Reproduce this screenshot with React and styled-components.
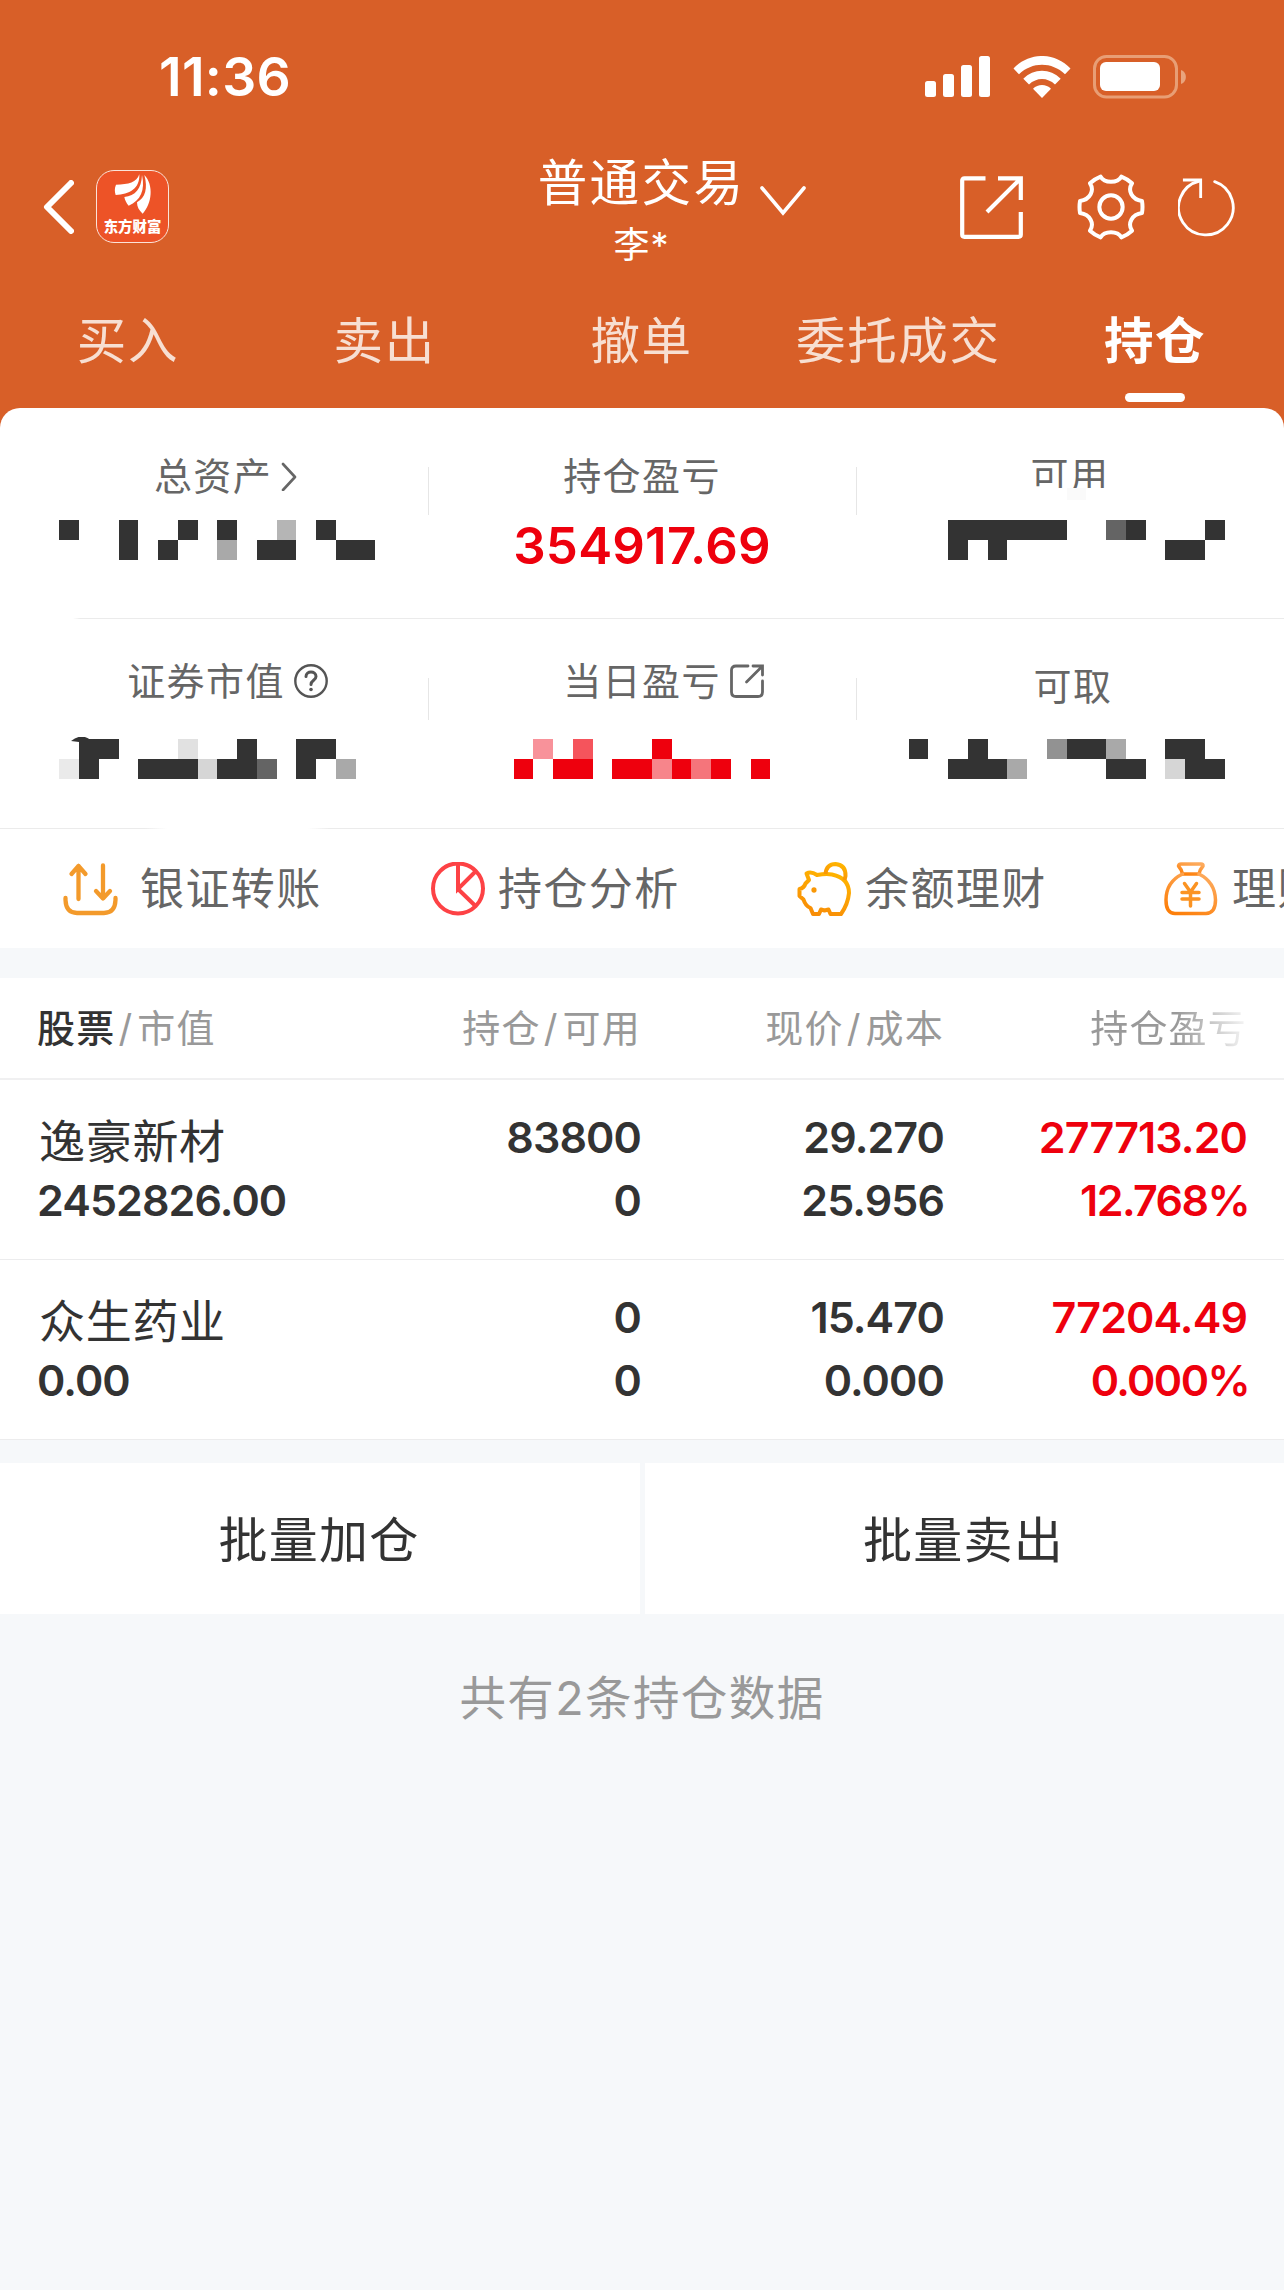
import React from 'react';
import styled, { createGlobalStyle } from 'styled-components';

const GlobalStyle = createGlobalStyle`
  * {
    box-sizing: border-box;
  }
  body {
    margin: 0;
    background: #f6f8fa;
    font-family: Inter, "Noto Sans CJK SC", sans-serif;
    overflow-x: hidden;
  }
`;

const Page = styled.div`
  width: 1284px;
  height: 2290px;
  overflow: hidden;
  background: #f6f8fa;
`;

const Top = styled.header`
  height: 428px;
  background: #d85f28;
  color: #fff;
`;

const StatusBar = styled.div`
  height: 154px;
  padding: 0 96px 0 159px;
  display: flex;
  justify-content: space-between;
  align-items: center;
`;

const Clock = styled.div`
  font-size: 53.5px;
  font-weight: 600;
  line-height: 60px;
  letter-spacing: 0.3px;
`;

const StatusIcons = styled.div`
  display: flex;
  align-items: center;
  height: 44px;
`;

const NavBar = styled.div`
  height: 126px;
  display: grid;
  grid-template-columns: 428px 428px 428px;
`;

const NavLeft = styled.div`
  display: flex;
  align-items: center;
  gap: 22px;
  padding: 0 0 21px 43px;
  height: 126px;
`;

const Logo = styled.div`
  width: 73px;
  height: 73px;
  border: 1.5px solid #fbe3d9;
  border-radius: 18px;
  background: #ed5327;
  display: flex;
  flex-direction: column;
  align-items: center;
`;

const LogoMark = styled.svg`
  margin-top: 2px;
`;

const LogoText = styled.div`
  margin-top: -4px;
  font-family: "Noto Sans CJK SC", sans-serif;
  font-size: 14.4px;
  font-weight: 900;
  line-height: 18px;
  white-space: nowrap;
`;

const NavTitle = styled.div`
  display: flex;
  justify-content: center;
  gap: 15px;
  padding-left: 60px;
`;

const TitleText = styled.div`
  display: flex;
  flex-direction: column;
  align-items: center;
  padding-top: 1px;
  font-size: 49.5px;
  line-height: 56px;
  letter-spacing: 2.4px;
  white-space: nowrap;
`;

const Account = styled.span`
  font-size: 36px;
  line-height: 44px;
  margin-top: 12px;
  letter-spacing: 1px;
`;

const TitleArrow = styled.svg`
  margin-top: 31px;
`;

const NavRight = styled.div`
  display: flex;
  align-items: center;
  height: 126px;
  padding: 0 0 20px 104px;
`;

const Tabs = styled.nav`
  display: grid;
  grid-template-columns: repeat(5, 1fr);
  height: 148px;
`;

const Tab = styled.div`
  display: flex;
  flex-direction: column;
  align-items: center;
  padding: 31px 1px 0 0;
  font-size: 49.5px;
  line-height: 60px;
  letter-spacing: 1.6px;
  font-weight: ${({ $active }) => ($active ? 700 : 400)};
  color: ${({ $active }) => ($active ? '#fff' : '#f7dfd2')};

  &::after {
    content: "";
    width: 60px;
    height: 9px;
    margin-top: 22px;
    border-radius: 4.5px;
    background: ${({ $active }) => ($active ? '#fff' : 'transparent')};
  }
`;

const Summary = styled.section`
  margin-top: -20px;
  height: 421px;
  background: #fff;
  border-radius: 20px 20px 0 0;
`;

const SummaryRow = styled.div`
  display: grid;
  grid-template-columns: repeat(3, 1fr);
  height: ${({ $height }) => $height}px;
`;

const SummaryCell = styled.div`
  position: relative;
  height: 100%;
  padding-top: ${({ $top }) => $top}px;

  &:not(:last-child)::after {
    content: "";
    position: absolute;
    right: -1px;
    top: 59px;
    width: 1px;
    height: ${({ $rule }) => $rule}px;
    background: #e6e6e6;
  }
`;

const Label = styled.div`
  display: flex;
  align-items: center;
  justify-content: center;
  height: 44px;
  padding-left: ${({ $shift }) => $shift || 0}px;
  gap: 9px;
  font-size: 38px;
  line-height: 44px;
  letter-spacing: 1.4px;
  color: #666;
`;

const Amount = styled.div`
  margin-top: 18px;
  text-align: center;
  font-size: 51px;
  font-weight: 600;
  line-height: 60px;
  letter-spacing: 0.2px;
  color: #ee000d;
`;

const Mosaic = styled.div`
  position: relative;
  display: grid;
  grid-template-columns: repeat(${({ $cols }) => $cols}, 19.75px);
  grid-auto-rows: 20px;
  margin-top: ${({ $gap }) => $gap}px;
  margin-left: ${({ $left }) => $left}px;
`;

const Pixel = styled.span`
  background: ${({ $color }) => $color};
`;

const Smudge = styled.svg`
  position: absolute;
  left: 12px;
  top: -2px;
`;

// erased strip that overlaps the lower edge of the label
const Residue = styled.span`
  position: absolute;
  left: 170px;
  top: 80px;
  width: 90px;
  height: 12px;
  background: linear-gradient(90deg, #fff 41px, #fafafa 41px, #fafafa 60px, #fff 60px);
`;

const Rule = styled.div`
  height: 1px;
  background: ${({ $fade }) => $fade};
`;

const Shortcuts = styled.section`
  display: flex;
  height: 119px;
  padding-left: 63px;
  background: #fff;
  overflow: hidden;
`;

const Shortcut = styled.div`
  display: flex;
  align-items: center;
  flex: 0 0 367px;
  gap: ${({ $gap }) => $gap}px;
  font-size: 44px;
  line-height: 60px;
  letter-spacing: 1.4px;
  color: #666;
  white-space: nowrap;

  svg {
    flex: none;
  }
`;

const Holdings = styled.section`
  margin-top: 30px;
  background: #fff;
`;

const columns = '341px 263px 303px 303px';

const HeadRow = styled.div`
  display: grid;
  grid-template-columns: ${columns};
  height: 102px;
  padding: 27px 0 0 37px;
  border-bottom: 2px solid #f0f0f1;
  font-size: 38px;
  line-height: 46px;
  letter-spacing: 1.2px;
  color: #999;
  white-space: nowrap;
`;

const HeadCell = styled.div`
  text-align: ${({ $left }) => ($left ? 'left' : 'right')};

  b {
    font-weight: 500;
    color: #333;
  }

  i {
    font-style: normal;
    margin: 0 4px 0 3px;
  }
`;

const Fading = styled.span`
  background: linear-gradient(90deg, #999 0, #999 55%, #f6f6f6 100%);
  background-clip: text;
  color: transparent;
`;

const StockRow = styled.div`
  display: grid;
  grid-template-columns: ${columns};
  height: 180px;
  padding: 26px 0 0 37px;
  border-bottom: 1px solid #ececed;
`;

const StockCell = styled.div`
  text-align: ${({ $left }) => ($left ? 'left' : 'right')};
  color: ${({ $up }) => ($up ? '#ee000d' : '#333')};
  font-size: 43px;
  font-weight: 600;
  line-height: 63px;
  letter-spacing: -0.9px;
`;

const StockName = styled.div`
  padding: 4px 0 0 2px;
  height: 63px;
  font-size: 46px;
  font-weight: 400;
  letter-spacing: 0.7px;
`;

const Rate = styled.div`
  margin-right: -2px;
  letter-spacing: -1.6px;
`;

const Actions = styled.section`
  display: grid;
  grid-template-columns: 640px 639px;
  gap: 5px;
  margin-top: 23px;
`;

const Action = styled.button`
  height: 151px;
  padding: 0 2px 4px 0;
  border: 0;
  background: #fff;
  color: #333;
  font-family: inherit;
  font-size: 49px;
  font-weight: 400;
  letter-spacing: 1.2px;
`;

const Footer = styled.div`
  padding-top: 54px;
  text-align: center;
  font-size: 46.5px;
  line-height: 60px;
  letter-spacing: 1.4px;
  color: #999;
`;

const tabs = ['买入', '卖出', '撤单', '委托成交', '持仓'];

const shades = {
  '#': '#333',
  m: '#646464',
  n: '#929292',
  a: '#a9a9a9',
  b: '#b5b5b5',
  d: '#d6d6d6',
  e: '#e1e1e1',
  f: '#eaeaea',
  r: '#ee000d',
  p: '#f8929a',
  q: '#f5545c',
  s: '#f7858b',
  t: '#f5757b',
  '.': 'transparent',
};

// hidden amounts, two rows of blocks each
const hidden = {
  total: ['#..#..#.#..b.#..', '...#.#..a.##..##'],
  usable: ['..######..m#...#', '..#.#........##.'],
  value: ['.##...e..#..##..', 'f#..###d##m.#.a.'],
  today: ['.p.q...r.....', 'r.rr.rrsrtr.r'],
  cash: ['#..#...n##a..##.', '..###a....##.d##'],
};

const stocks = [
  {
    name: '逸豪新材',
    value: '2452826.00',
    held: '83800',
    usable: '0',
    price: '29.270',
    cost: '25.956',
    profit: '277713.20',
    rate: '12.768%',
  },
  {
    name: '众生药业',
    value: '0.00',
    held: '0',
    usable: '0',
    price: '15.470',
    cost: '0.000',
    profit: '77204.49',
    rate: '0.000%',
  },
];

const Blocks = ({ rows, left, gap, children }) => (
  <Mosaic $cols={rows[0].length} $left={left} $gap={gap}>
    {rows.join('').split('').map((code, index) => (
      <Pixel key={index} $color={shades[code]} />
    ))}
    {children}
  </Mosaic>
);

const SignalIcon = () => (
  <svg width="66" height="42" viewBox="0 0 66 42" fill="#fff">
    <rect x="0" y="25" width="11" height="16" rx="2.5" />
    <rect x="18" y="18" width="11" height="23" rx="2.5" />
    <rect x="36" y="9" width="11" height="32" rx="2.5" />
    <rect x="54" y="0" width="11" height="41" rx="2.5" />
  </svg>
);

const Wifi = styled.svg`
  margin: 0 22px;
`;

const WifiIcon = () => (
  <Wifi width="58" height="42" viewBox="0 0 58 42" fill="#fff">
    <path d="M0.5 12.5 C16 -4.2 42 -4.2 57.5 12.5 L52 18.3 C39 5.6 19 5.6 6 18.3 Z" />
    <path d="M10.3 22.8 C20.5 12 37.5 12 47.7 22.8 L42 28.6 C34.5 21.2 23.5 21.2 16 28.6 Z" />
    <path d="M20 32.8 C25 27.8 33 27.8 38 32.8 L29 42 Z" />
  </Wifi>
);

const BatteryIcon = () => (
  <svg width="95" height="44" viewBox="0 0 95 44">
    <rect x="1.5" y="1.5" width="82" height="40.5" rx="12" fill="none" stroke="#e89e75" strokeWidth="3" />
    <rect x="7" y="7" width="60" height="29" rx="6" fill="#fff" />
    <path d="M88 15 C94.5 17 94.5 27 88 29 Z" fill="#e9a47d" />
  </svg>
);

const BackIcon = () => (
  <svg width="31" height="54" viewBox="0 0 31 54" fill="none" stroke="#fff" strokeWidth="6" strokeLinecap="round" strokeLinejoin="round">
    <path d="M28 3 L4 27 L28 51" />
  </svg>
);

const ShareIcon = () => (
  <svg width="63" height="63" viewBox="0 0 63 63" fill="none" stroke="#fff" strokeWidth="4.2">
    <path d="M25.5 2.3 H4.5 Q2.2 2.3 2.2 4.6 V58.5 Q2.2 60.8 4.5 60.8 H58.5 Q60.8 60.8 60.8 58.5 V36" />
    <path d="M38 2.3 H60.8 V24 M60.8 2.3 L27 36" />
  </svg>
);

const Gear = styled.svg`
  margin: 0 33px 0 54px;
`;

const GearIcon = () => (
  <Gear width="68" height="68" viewBox="-102 -102 204 204" fill="none" stroke="#fff" strokeWidth="12" strokeLinejoin="round">
    <path d="M-31 -91 C-20 -71 20 -71 31 -91 Q49 -84 63 -71 C49 -50 62 -22 93 -18 Q96 0 93 18 C62 22 49 50 63 71 Q49 84 31 91 C20 71 -20 71 -31 91 Q-49 84 -63 71 C-49 50 -62 22 -93 18 Q-96 0 -93 -18 C-62 -22 -49 -50 -63 -71 Q-49 -84 -31 -91 Z" />
    <circle r="35" />
  </Gear>
);

const RefreshIcon = () => (
  <svg width="60" height="60" viewBox="-90 -90 180 180" fill="none" stroke="#fff" strokeWidth="8.5" strokeLinecap="round">
    <path d="M20 -76 A82 82 0 1 1 -26 -78" />
    <path d="M-71 -81 H-22 V-31" strokeLinecap="square" />
  </svg>
);

const TransferIcon = () => (
  <svg width="55" height="54" viewBox="0 0 55 54" fill="none" stroke="#f39a2b" strokeWidth="4.3" strokeLinecap="round" strokeLinejoin="round">
    <path d="M15.5 37 V4 M8.5 12 L15.5 4 L22.5 12" />
    <path d="M40 3.5 V36 M33 29 L40 36.5 L47 29" />
    <path d="M2.5 36 V38 Q3 51 14 51 H41 Q52 51 52.5 38 V36" />
  </svg>
);

const PieIcon = () => (
  <svg width="55" height="54" viewBox="0 0 55 54" fill="none" stroke="#fd4245" strokeWidth="4">
    <circle cx="28" cy="26.5" r="25" />
    <path d="M28 2 V27 L46 9 M28 27 L46 44.5" />
  </svg>
);

const PiggyIcon = () => (
  <svg width="54" height="54" viewBox="0 0 54 54" fill="none" stroke="url(#pig)" strokeWidth="4" strokeLinejoin="round">
    <defs>
      <linearGradient id="pig" x1="0.7" y1="0" x2="0.3" y2="1">
        <stop offset="0" stopColor="#ffb400" />
        <stop offset="1" stopColor="#f88d07" />
      </linearGradient>
    </defs>
    <path d="M9.5 11.5 Q14 9 20 13 Q29 11.5 35 12.5 Q52 16 52 31 Q51 42 44 52 H33.5 L31.5 47.5 L27.5 48.5 L24 47.5 L22 52 H16 L13.5 46 Q8.5 44 6.5 37.5 L2.5 34 V27 Q7 26 8.5 21.5 L12 18 Z" />
    <path d="M28.5 12 Q29.5 2 38.5 2 Q49 3 48.5 14 L47.5 18" />
    <ellipse cx="17" cy="28" rx="2.6" ry="2.8" fill="#f99806" stroke="none" />
  </svg>
);

const BagIcon = () => (
  <svg width="54" height="54" viewBox="0 0 54 54" fill="none" stroke="url(#bag)" strokeWidth="3.5" strokeLinecap="round" strokeLinejoin="round">
    <defs>
      <linearGradient id="bag" x1="0.8" y1="0" x2="0.2" y2="1">
        <stop offset="0" stopColor="#fdaa5c" />
        <stop offset="1" stopColor="#fd7f0a" />
      </linearGradient>
    </defs>
    <path d="M18.5 12 Q18 8 14.5 4 Q15 2 17 2 H37 Q39.5 2 39 4 Q35.5 8 35 12 Z" />
    <path d="M18.5 12 Q2 20 2 38 Q2 51.5 11 51.5 H42 Q51.5 51 51.5 38 Q51 20 35 12" />
    <path d="M20.5 21.5 L26.5 30 L32.5 21.5 M26.5 30 V44 M18 30.5 H35 M18 37 H35" stroke="#fb9322" />
  </svg>
);

const Stock = ({ stock }) => (
  <StockRow>
    <StockCell $left>
      <StockName>{stock.name}</StockName>
      <div>{stock.value}</div>
    </StockCell>
    <StockCell>
      <div>{stock.held}</div>
      <div>{stock.usable}</div>
    </StockCell>
    <StockCell>
      <div>{stock.price}</div>
      <div>{stock.cost}</div>
    </StockCell>
    <StockCell $up>
      <div>{stock.profit}</div>
      <Rate>{stock.rate}</Rate>
    </StockCell>
  </StockRow>
);

const App = () => {
  return (
    <Page>
      <GlobalStyle />
      <Top>
        <StatusBar>
          <Clock>11:36</Clock>
          <StatusIcons>
            <SignalIcon />
            <WifiIcon />
            <BatteryIcon />
          </StatusIcons>
        </StatusBar>
        <NavBar>
          <NavLeft>
            <BackIcon />
            <Logo>
              <LogoMark width="42" height="48" viewBox="42 14 126 144" fill="#fff">
                <path d="M124 18 C116 42 92 49 54 49 C49 60 50 70 53 80 C94 78 126 62 124 18 Z" />
                <path d="M132 20 C130 62 112 82 79 86 C81 96 85 104 92 112 C128 96 142 66 132 20 Z" />
                <path d="M139 20 C150 60 142 88 117 102 C117 116 123 126 134 136 C162 106 168 50 139 20 Z" />
              </LogoMark>
              <LogoText>东方财富</LogoText>
            </Logo>
          </NavLeft>
          <NavTitle>
            <TitleText>
              普通交易
              <Account>李*</Account>
            </TitleText>
            <TitleArrow width="46" height="32" viewBox="0 0 46 32" fill="none" stroke="#fff" strokeWidth="3.6" strokeLinecap="round">
              <path d="M2 3 L23 28 L44 3" />
            </TitleArrow>
          </NavTitle>
          <NavRight>
            <ShareIcon />
            <GearIcon />
            <RefreshIcon />
          </NavRight>
        </NavBar>
        <Tabs>
          {tabs.map((tab, index) => (
            <Tab key={tab} $active={index === 4}>{tab}</Tab>
          ))}
        </Tabs>
      </Top>

      <Summary>
        <SummaryRow $height={210}>
          <SummaryCell $top={46} $rule={48}>
            <Label $shift={23}>
              总资产
              <svg width="16" height="30" viewBox="0 0 16 30" fill="none" stroke="#666" strokeWidth="2.6" strokeLinecap="round" strokeLinejoin="round">
                <path d="M2 3 L14 16 L2 29" />
              </svg>
            </Label>
            <Blocks rows={hidden.total} left={59.25} gap={22} />
          </SummaryCell>
          <SummaryCell $top={46} $rule={48}>
            <Label>持仓盈亏</Label>
            <Amount>354917.69</Amount>
          </SummaryCell>
          <SummaryCell $top={45}>
            <Label>可用</Label>
            <Residue />
            <Blocks rows={hidden.usable} left={52.5} gap={23} />
          </SummaryCell>
        </SummaryRow>
        <Rule $fade="linear-gradient(90deg, #fff 73px, #ebebeb 80px)" />
        <SummaryRow $height={209}>
          <SummaryCell $top={40} $rule={42}>
            <Label $shift={27}>
              证券市值
              <svg width="34" height="34" viewBox="0 0 34 34" fill="none" stroke="#555" strokeWidth="2.4" strokeLinecap="round">
                <circle cx="17" cy="17" r="15.7" />
                <path d="M12 12.5 C12 6.5 22 6.5 22 12.5 C22 16.5 17 16 17 20.5" strokeWidth="3" />
                <circle cx="17" cy="25.5" r="1.8" fill="#555" stroke="none" />
              </svg>
            </Label>
            <Blocks rows={hidden.value} left={59.25} gap={36}>
              <Smudge width="46" height="5" viewBox="0 0 46 5" fill="#333">
                <path d="M0 4 Q10 -4 19 2.5 L34 2 V5 H8 Z" />
              </Smudge>
            </Blocks>
          </SummaryCell>
          <SummaryCell $top={40} $rule={42}>
            <Label $shift={43}>
              当日盈亏
              <svg width="34" height="34" viewBox="0 0 34 34" fill="none" stroke="#666" strokeWidth="2.8" strokeLinecap="round">
                <path d="M18 2 H6 Q1.5 2 1.5 6 V28 Q1.5 32.5 6 32.5 H28 Q32.5 32.5 32.5 28 V17" />
                <path d="M23 2 H32.5 V11 M32 2.5 L16.5 18" />
              </svg>
            </Label>
            <Blocks rows={hidden.today} left={85.5} gap={36} />
          </SummaryCell>
          <SummaryCell $top={45}>
            <Label $shift={6}>可取</Label>
            <Blocks rows={hidden.cash} left={52.5} gap={31} />
          </SummaryCell>
        </SummaryRow>
        <Rule $fade="linear-gradient(90deg, #ebebeb 145px, #fff 167px, #fff 308px, #ebebeb 330px)" />
      </Summary>

      <Shortcuts>
        <Shortcut $gap={22}>
          <TransferIcon />
          银证转账
        </Shortcut>
        <Shortcut $gap={13}>
          <PieIcon />
          持仓分析
        </Shortcut>
        <Shortcut $gap={14}>
          <PiggyIcon />
          余额理财
        </Shortcut>
        <Shortcut $gap={14}>
          <BagIcon />
          理财
        </Shortcut>
      </Shortcuts>

      <Holdings>
        <HeadRow>
          <HeadCell $left><b>股票</b><i>/</i>市值</HeadCell>
          <HeadCell>持仓<i>/</i>可用</HeadCell>
          <HeadCell>现价<i>/</i>成本</HeadCell>
          <HeadCell><Fading>持仓盈亏</Fading></HeadCell>
        </HeadRow>
        {stocks.map((stock) => (
          <Stock key={stock.name} stock={stock} />
        ))}
      </Holdings>

      <Actions>
        <Action>批量加仓</Action>
        <Action>批量卖出</Action>
      </Actions>
      <Footer>共有2条持仓数据</Footer>
    </Page>
  );
};

export default App;
